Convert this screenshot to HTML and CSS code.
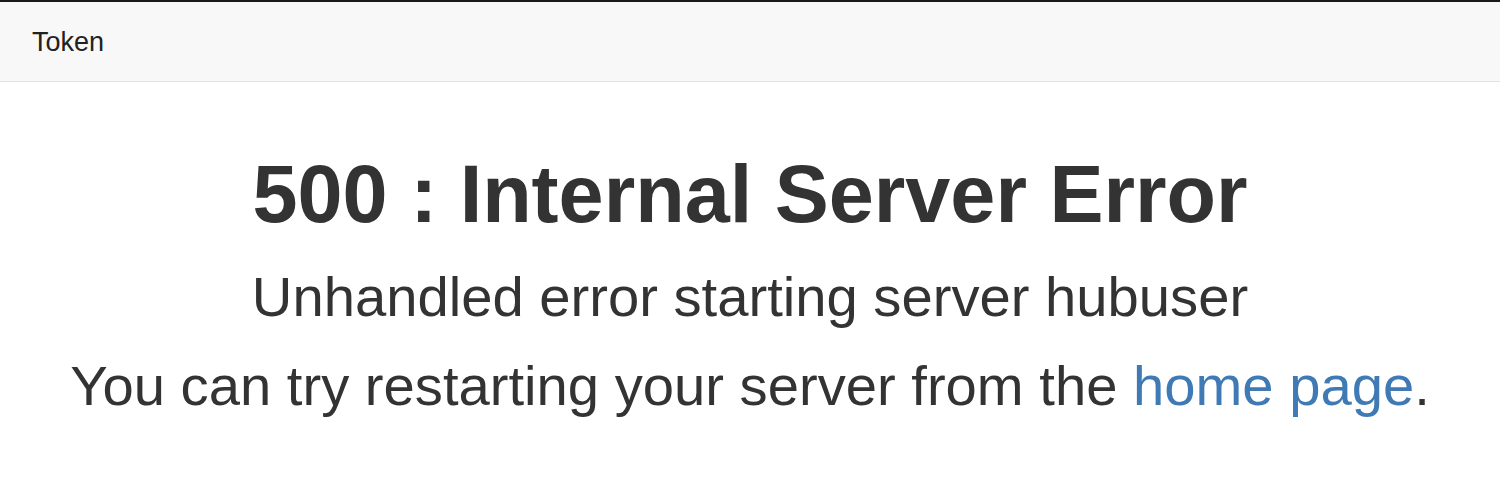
FILE: index.html
```html
<!DOCTYPE html>
<html>
<head>
<meta charset="utf-8">
<link rel="stylesheet" href="styles.css">
</head>
<body>
<nav class="navbar"><span class="brand">Token</span></nav>
<main class="error">
  <h1 class="title">500 : Internal Server Error</h1>
  <p class="message">Unhandled error starting server hubuser</p>
  <p class="hint">You can try restarting your server from the <a href="#">home page</a>.</p>
</main>
</body>
</html>
```
FILE: styles.css
```css
html, body { margin: 0; padding: 0; background: #fff; }
body { font-family: "Liberation Sans", Arial, sans-serif; color: #333; }
.navbar {
  box-sizing: border-box;
  height: 82px;
  background: #f8f8f8;
  border-top: 2px solid #1a1a1a;
  border-bottom: 1px solid #e3e3e3;
  display: flex;
  align-items: center;
  padding-left: 32px;
}
.brand { font-size: 27px; color: #222; padding-top: 2px; }
.error { text-align: center; }
.title {
  font-size: 81px; font-weight: bold; line-height: 90px;
  margin: 67px 0 0;
}
.message { font-size: 56.2px; line-height: 64px; margin: 26px 0 0; }
.hint { font-size: 56.2px; line-height: 64px; margin: 25px 0 0; }
.hint a { color: #3f7ab5; text-decoration: none; }
```
